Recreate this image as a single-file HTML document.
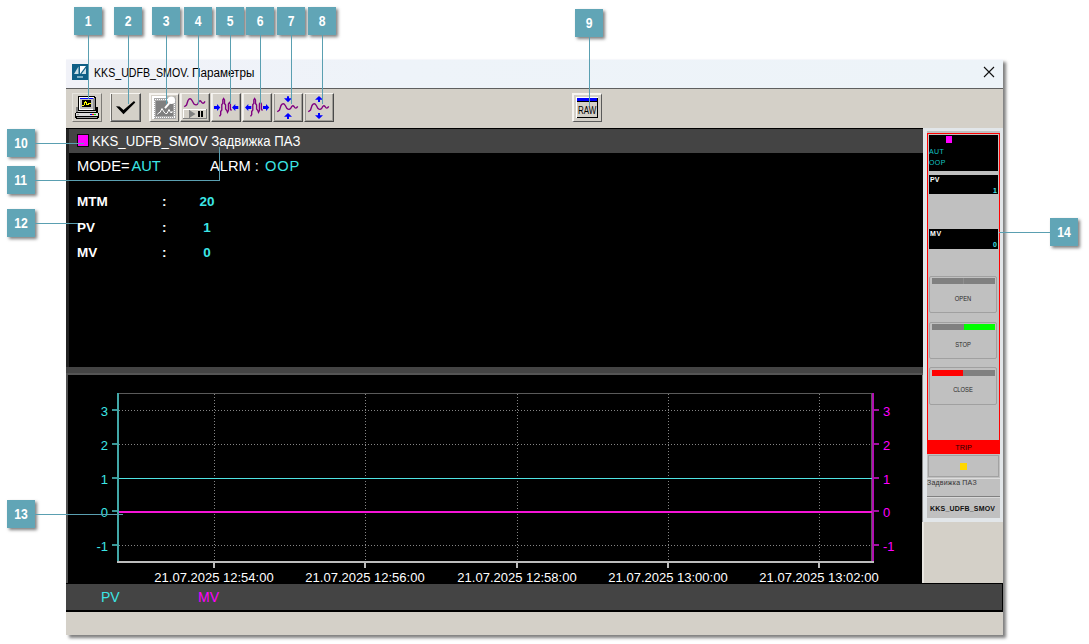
<!DOCTYPE html>
<html lang="ru">
<head>
<meta charset="utf-8">
<title>KKS_UDFB_SMOV. Параметры</title>
<style>
*{box-sizing:border-box;margin:0;padding:0}
html,body{width:1089px;height:644px;overflow:hidden;background:#fff}
body{position:relative;font-family:"Liberation Sans",sans-serif}
.a{position:absolute}
.t{position:absolute;white-space:nowrap;line-height:1}
.co{position:absolute;width:28px;height:28px;background:#61a5b6;color:#fff;font:bold 14.5px/28px "Liberation Sans",sans-serif;text-align:center;box-shadow:2px 2px 3px rgba(0,0,0,.5)}
.co span{display:inline-block;transform:scaleX(.84)}
.ln{position:absolute;background:#5a9fb1}
#win{left:66px;top:59px;width:937px;height:576px;background:#d4d0c8;box-shadow:3px 3px 3px rgba(0,0,0,.5)}
#title{left:66px;top:59px;width:937px;height:29px;background:linear-gradient(90deg,#f1f2f8 0%,#eef3f9 35%,#edf3f8 100%)}
.cap{left:93px;top:67px;font-size:12px;color:#000;transform-origin:0 0;transform:scaleX(.92)}
.btn{position:absolute;top:93px;width:30px;height:29px;background:#d4d0c8;border:1px solid;border-color:#f6f4f0 #4a4a4a #4a4a4a #f6f4f0;box-shadow:inset -1px -1px 0 #8a8884}
.w13{font-size:13.33px;color:#fff}
.w14{font-size:14.67px;color:#fff}
.c14{font-size:14.67px;color:#3ce6e6}
.c13{font-size:13.33px;color:#3ce6e6}
.b13{font-size:13.5px;font-weight:bold;color:#fff}
.v13{font-size:13.5px;font-weight:bold;color:#3ce6e6;width:20px;text-align:center}
.fb{position:absolute;left:929px;width:69px;background:#000}
.ft{position:absolute;white-space:nowrap;line-height:1;font-size:7px}
.fbtn{position:absolute;left:929px;width:68px;height:37px;border:1px solid #a0a0a0;border-radius:2px}
.bar{position:absolute;left:932px;width:63px;height:6px;background:#808080}
.cl{font-size:13px}
.yl{width:18px;text-align:right;color:#3ce6e6;left:90px}
.yr{color:#ff00ff;left:883px}
.xl{width:120px;text-align:center;color:#fff;top:571px}
</style>
</head>
<body>
<div id="win" class="a"></div>
<div id="title" class="a"></div>
<div class="a" style="left:66px;top:59px;width:937px;height:1px;background:#f6f7fb"></div>
<svg class="a" style="left:72px;top:64px" width="16" height="16" viewBox="0 0 16 16"><rect width="16" height="16" fill="#0f5f86"/><path d="M2 10 L6.5 2.5 L6.5 10 Z" fill="#c9dfe8"/><path d="M8 10 L8 2 L14 2 Z" fill="#ffffff"/><path d="M9.5 10 L14 4 L14 10 Z" fill="#c9dfe8"/><rect x="5" y="12" width="6" height="2" fill="#7fb0c6"/></svg>
<div class="t cap" style="left:93.5px;transform:scaleX(.885)">KKS_UDFB_SMOV.</div>
<div class="t cap" style="left:192px;transform:scaleX(.975)">Параметры</div>
<svg class="a" style="left:983px;top:66px" width="12" height="12" viewBox="0 0 12 12"><path d="M1 1 L11 11 M11 1 L1 11" stroke="#111" stroke-width="1.1" fill="none"/></svg>
<div class="a" style="left:66px;top:88px;width:937px;height:1px;background:#5f5f5f"></div>
<div class="btn" style="left:72px;border-color:#e6e4de #7c7a76 #7c7a76 #e6e4de;box-shadow:none"></div>
<div class="btn" style="left:110px;width:31px;box-shadow:inset -1px -1px 0 #808080,inset 1px 0 0 #6e6c68"></div>
<div class="btn" style="left:149px;border-left-width:2px;border-top-width:2px;box-shadow:none;border-right-color:#5a5a5a;border-bottom-color:#5a5a5a"></div>
<div class="btn" style="left:180px;box-shadow:inset -1px -1px 0 #a09e98,inset 1px 0 0 #eeece8"></div>
<div class="btn" style="left:211px;box-shadow:inset -1px -1px 0 #a09e98,inset 1px 0 0 #eeece8"></div>
<div class="btn" style="left:242px;box-shadow:inset -1px -1px 0 #a09e98,inset 1px 0 0 #eeece8"></div>
<div class="btn" style="left:273px;border-left-color:#e4e2dc;box-shadow:inset -1px -1px 0 #a09e98,inset 1px 0 0 #9a9894"></div>
<div class="btn" style="left:304px;border-left-color:#e4e2dc;box-shadow:inset -1px -1px 0 #a09e98,inset 1px 0 0 #9a9894"></div>
<div class="btn" style="left:572px;border-left-width:2px;border-top-width:2px;box-shadow:none;border-right-color:#5a5a5a;border-bottom-color:#5a5a5a"></div>
<svg class="a" style="left:0;top:0" width="1089" height="644" viewBox="0 0 1089 644">
<!-- 1: workstation -->
<g shape-rendering="crispEdges">
<rect x="76" y="107" width="2" height="5" fill="#808080"/>
<rect x="96" y="107" width="2" height="5" fill="#000"/>
<rect x="78" y="96" width="17" height="15" fill="#000"/>
<rect x="95" y="97" width="1" height="14" fill="#000"/>
<rect x="79" y="97" width="15" height="13" fill="#fff"/>
<rect x="80" y="98" width="14" height="11" fill="#c0c0c0"/>
<rect x="93" y="98" width="2" height="12" fill="#909090"/>
<rect x="80" y="98" width="13" height="1" fill="#0000ff"/>
<rect x="82" y="100" width="9" height="7" fill="#000"/>
<rect x="78" y="111" width="18" height="1" fill="#c8c8c8"/>
<rect x="75" y="112" width="24" height="7" fill="#000"/>
<rect x="75" y="112" width="1" height="1" fill="#d4d0c8"/>
<rect x="98" y="112" width="1" height="1" fill="#d4d0c8"/>
<rect x="75" y="118" width="1" height="1" fill="#d4d0c8"/>
<rect x="98" y="118" width="1" height="1" fill="#d4d0c8"/>
<rect x="76" y="113" width="22" height="3" fill="#dcdcdc"/>
<rect x="77" y="114" width="2" height="1" fill="#a0a0a0"/>
<rect x="90" y="114" width="2" height="1" fill="#0000ff"/>
<rect x="92" y="114" width="2" height="1" fill="#ff0000"/>
<rect x="94" y="114" width="2" height="1" fill="#00e000"/>
<rect x="77" y="117" width="20" height="1" fill="#a0a0a0"/>
<g fill="#ffff00"><rect x="82" y="105" width="2" height="1"/><rect x="84" y="102" width="1" height="3"/><rect x="85" y="101" width="1" height="2"/><rect x="86" y="102" width="1" height="2"/><rect x="86" y="104" width="3" height="1"/><rect x="88" y="103" width="3" height="1"/></g>
</g>
<!-- 2: check -->
<path d="M116 106.2L119.6 106.4L123.5 110L134 101L135.3 102.6L123.5 114.2Z" fill="#000"/>
<!-- 3: snapshot (disabled) -->
<g shape-rendering="crispEdges">
<rect x="152" y="96" width="24" height="23" fill="#fff"/>
<rect x="154" y="98" width="22" height="21" fill="#a8a8a8"/>
<rect x="154.5" y="99.5" width="20" height="18" fill="none" stroke="#fff" stroke-width="1" stroke-dasharray="1 1"/>
<rect x="156" y="101" width="17" height="15" fill="#808080"/>
<rect x="166" y="96" width="10" height="2" fill="#b8b6b0"/>
</g>
<circle cx="171.3" cy="100.2" r="3.8" fill="#fff"/>
<path d="M169.3 103.2L165 108.2" stroke="#fff" stroke-width="2" fill="none"/>
<path d="M157.5 114.5L159 112.5H160L162 108.5L164 112L165.5 113.5H167L169 109.5L170.5 112.5H172V111" stroke="#fff" stroke-width="1" fill="none"/>
<!-- 4: wave + play/pause -->
<path d="M184.3 106.8L186.5 105L188 100.5Q190 97 192 100.5L194 104Q196.5 106 198 103.5Q199.5 99.5 201 101.5Q203 105 205 101.3" stroke="#800080" stroke-width="1.4" fill="none"/>
<g shape-rendering="crispEdges">
<rect x="183" y="109" width="24" height="10" fill="#808080"/>
<rect x="183" y="109" width="23" height="9" fill="#fff"/>
<rect x="184" y="110" width="22" height="8" fill="#d4d0c8"/>
<rect x="189" y="110" width="1" height="8" fill="#808080"/>
<rect x="198" y="111" width="2" height="6" fill="#000"/>
<rect x="201" y="111" width="2" height="6" fill="#000"/>
</g>
<path d="M190 110.5L195.5 114L190 117.5Z" fill="#808080"/>
<!-- 5: compress horizontally -->
<g id="w5"><path d="M219.5 116.3L220.7 114.5V111.5L221.8 110V104.5L222.8 103.5V100L223.6 98.6L224.5 100V103.5L225.6 105V109L226.8 110.5L227.5 112.3L228.4 110.5V104L229.5 102.5L230.4 104V109.2L231.5 110.5" stroke="#800080" stroke-width="1.35" fill="none"/></g>
<path d="M214 106H217V104L220.3 107.5L217 111V109H214Z" fill="#0000ff"/>
<path d="M238.3 106H235.3V104L232 107.5L235.3 111V109H238.3Z" fill="#0000ff"/>
<!-- 6: expand horizontally -->
<use href="#w5" x="31"/>
<path d="M251.3 106H248.3V104L245 107.5L248.3 111V109H251.3Z" fill="#0000ff"/>
<path d="M263 106H266V104L269.3 107.5L266 111V109H263Z" fill="#0000ff"/>
<!-- 7: compress vertically -->
<g id="w7"><path d="M277.3 111.7L279.5 110L281 105.5Q283.3 102 285.3 105.5L287 108.5Q289.3 110.5 291 107.8Q292.5 104.5 294 106.5Q295.8 109.8 297.7 106.3" stroke="#800080" stroke-width="1.4" fill="none"/></g>
<path d="M287 96.2H289V98.3H292L288 102.2L284 98.3H287Z" fill="#0000ff"/>
<path d="M287 119H289V116.8H292L288 113L284 116.8H287Z" fill="#0000ff"/>
<!-- 8: expand vertically -->
<use href="#w7" x="31"/>
<path d="M318 102H320V99.8H323L319 96L315 99.8H318Z" fill="#0000ff"/>
<path d="M318 113H320V115.2H323L319 119.1L315 115.2H318Z" fill="#0000ff"/>
<!-- 9: RAW -->
<g shape-rendering="crispEdges">
<rect x="576" y="97" width="22" height="21" fill="#fff"/>
<rect x="577" y="98" width="21" height="20" fill="#000"/>
<rect x="577" y="98" width="20" height="3" fill="#0000ff"/>
<rect x="577" y="102" width="20" height="15" fill="#d4d0c8"/>
</g>
<text x="578" y="113.7" font-family="Liberation Sans, sans-serif" font-size="10.2" fill="#000" textLength="18.3" lengthAdjust="spacingAndGlyphs">RAW</text>
</svg>

<div class="a" style="left:66px;top:128px;width:857px;height:455px;background:#000"></div>
<div class="a" style="left:66px;top:129px;width:3px;height:238px;background:#222"></div>
<div class="a" style="left:69px;top:129px;width:854px;height:24px;background:#444"></div>
<div class="a" style="left:77px;top:134px;width:12px;height:13px;background:#0a0a0a"></div>
<div class="a" style="left:78px;top:135px;width:10px;height:11px;background:#ff00ff"></div>
<div class="t w13" style="left:92px;top:134px;font-size:14px;transform-origin:0 0;transform:scaleX(.94)">KKS_UDFB_SMOV Задвижка ПАЗ</div>
<div class="t w14" style="left:77px;top:159px">MODE=</div>
<div class="t c14" style="left:131.5px;top:159px">AUT</div>
<div class="t w14" style="left:210px;top:159px">ALRM :</div>
<div class="t c14" style="left:265px;top:159px;letter-spacing:.8px">OOP</div>
<div class="t b13" style="left:77px;top:195px">MTM</div>
<div class="t b13" style="left:162px;top:195px">:</div>
<div class="t v13" style="left:197px;top:195px">20</div>
<div class="t b13" style="left:77px;top:221px">PV</div>
<div class="t b13" style="left:162px;top:221px">:</div>
<div class="t v13" style="left:197px;top:221px">1</div>
<div class="t b13" style="left:77px;top:246px">MV</div>
<div class="t b13" style="left:162px;top:246px">:</div>
<div class="t v13" style="left:197px;top:246px">0</div>
<div class="a" style="left:66px;top:367px;width:857px;height:6px;background:#444"></div>
<div class="a" style="left:66px;top:373px;width:857px;height:2px;background:#555"></div>
<div class="a" style="left:66px;top:375px;width:2px;height:208px;background:#505050"></div>
<div class="a" style="left:922px;top:375px;width:1px;height:208px;background:#8a8a8a"></div>
<div class="a" style="left:66px;top:583px;width:937px;height:29px;background:#444;border:1px solid #000;border-left:0;border-bottom-width:2px"></div>
<div class="t" style="left:101px;top:590px;font-size:14px;color:#3ce6e6">PV</div>
<div class="t" style="left:198px;top:590px;font-size:14px;color:#ff00ff">MV</div>
<div class="a" style="left:922px;top:522px;width:2px;height:61px;background:#e8e6e0"></div>
<div class="a" style="left:923px;top:128px;width:80px;height:394px;background:#e2e6e9"></div>
<div class="a" style="left:927px;top:131px;width:73px;height:387px;background:#c0c0c0"></div>
<div class="a" style="left:927px;top:133px;width:73px;height:308px;border:1px solid #f00"></div>
<div class="fb" style="top:135px;height:36px"></div>
<div class="a" style="left:946.4px;top:136.4px;width:6px;height:6.5px;background:#ff00ff"></div>
<div class="ft" style="left:929px;top:148px;color:#12c4c4;letter-spacing:.4px">AUT</div>
<div class="ft" style="left:929px;top:159px;color:#12c4c4;letter-spacing:.4px">OOP</div>
<div class="fb" style="top:175px;height:19px"></div>
<div class="ft" style="left:930px;top:176px;color:#fff;font-weight:bold">PV</div>
<div class="ft" style="left:929px;top:187px;width:68px;text-align:right;color:#45e4e4;font-weight:bold">1</div>
<div class="fb" style="top:229px;height:20px"></div>
<div class="ft" style="left:930px;top:230px;color:#fff;font-weight:bold;letter-spacing:.6px">MV</div>
<div class="ft" style="left:929px;top:241px;width:68px;text-align:right;color:#45e4e4;font-weight:bold">0</div>
<div class="fbtn" style="top:276px;height:37px"></div>
<div class="bar" style="top:278px"></div>
<div class="a" style="left:963px;top:278px;width:1px;height:6px;background:#8e8e8e"></div>
<div class="ft" style="left:929px;top:295px;width:68px;text-align:center;color:#2a2a2a;transform:scaleX(.83)">OPEN</div>
<div class="fbtn" style="top:322px;height:37px"></div>
<div class="bar" style="top:324px"></div>
<div class="a" style="left:964px;top:324px;width:31px;height:6px;background:#00ff00"></div>
<div class="ft" style="left:929px;top:341px;width:68px;text-align:center;color:#2a2a2a;transform:scaleX(.83)">STOP</div>
<div class="fbtn" style="top:367px;height:38px"></div>
<div class="bar" style="top:370px"></div>
<div class="a" style="left:932px;top:370px;width:31px;height:6px;background:#ff0000"></div>
<div class="ft" style="left:929px;top:386px;width:68px;text-align:center;color:#2a2a2a;transform:scaleX(.83)">CLOSE</div>
<div class="a" style="left:927px;top:440px;width:73px;height:14px;background:#ff0000"></div>
<div class="ft" style="left:927px;top:444px;width:73px;text-align:center;color:#260000;font-size:7.3px">TRIP</div>
<div class="a" style="left:928px;top:455px;width:71px;height:22px;border:1px solid #a2a2a2"></div>
<div class="a" style="left:960px;top:463px;width:7px;height:7px;background:#ffd700"></div>
<div class="a" style="left:927px;top:478px;width:73px;height:1px;background:#dcdcdc"></div>
<div class="ft" style="left:927px;top:479px;color:#333;letter-spacing:.2px">Задвижка ПАЗ</div>
<div class="a" style="left:927px;top:496px;width:73px;height:1px;background:#808080"></div>
<div class="a" style="left:927px;top:497px;width:73px;height:1px;background:#d8d8d8"></div>
<div class="ft" style="left:930px;top:505px;color:#111;font-weight:bold;letter-spacing:.2px">KKS_UDFB_SMOV</div>
<svg class="a" style="left:0;top:0" width="1089" height="644" viewBox="0 0 1089 644" shape-rendering="crispEdges">
<rect x="119" y="393" width="753" height="1" fill="#5a5a5a"/>
<rect x="871" y="393" width="1" height="168" fill="#5a5a5a"/>
<g stroke="#858585" stroke-width="1" stroke-dasharray="1 2" fill="none">
<path d="M119 410.5H871M119 444.5H871M119 478.5H871M119 511.5H871M119 545.5H871"/>
<path d="M214.5 394V561M365.5 394V561M517.5 394V561M668.5 394V561M819.5 394V561"/>
</g>
<rect x="119" y="478" width="753" height="1" fill="#4fe3e3"/>
<rect x="119" y="511" width="753" height="2" fill="#f513d6"/>
<rect x="117" y="393" width="2" height="170" fill="#42a8a8"/>
<g fill="#3a9696"><rect x="112" y="409" width="5" height="2"/><rect x="112" y="443" width="5" height="2"/><rect x="112" y="477" width="5" height="2"/><rect x="112" y="510" width="5" height="2"/><rect x="112" y="544" width="5" height="2"/></g>
<rect x="872" y="393" width="2" height="170" fill="#b010b0"/>
<g fill="#a010a0"><rect x="874" y="409" width="5" height="2"/><rect x="874" y="443" width="5" height="2"/><rect x="874" y="477" width="5" height="2"/><rect x="874" y="510" width="5" height="2"/><rect x="874" y="544" width="5" height="2"/></g>
<rect x="117" y="561" width="757" height="2" fill="#bdbdbd"/>
<g fill="#bdbdbd"><rect x="213" y="563" width="2" height="5"/><rect x="364" y="563" width="2" height="5"/><rect x="516" y="563" width="2" height="5"/><rect x="667" y="563" width="2" height="5"/><rect x="818" y="563" width="2" height="5"/></g>
</svg>
<div class="cl">
<div class="t yl" style="top:405px">3</div>
<div class="t yr" style="top:405px">3</div>
<div class="t yl" style="top:439px">2</div>
<div class="t yr" style="top:439px">2</div>
<div class="t yl" style="top:473px">1</div>
<div class="t yr" style="top:473px">1</div>
<div class="t yl" style="top:506px">0</div>
<div class="t yr" style="top:506px">0</div>
<div class="t yl" style="top:540px">-1</div>
<div class="t yr" style="top:540px">-1</div>
<div class="t xl" style="left:154px">21.07.2025 12:54:00</div>
<div class="t xl" style="left:305px">21.07.2025 12:56:00</div>
<div class="t xl" style="left:457px">21.07.2025 12:58:00</div>
<div class="t xl" style="left:608px">21.07.2025 13:00:00</div>
<div class="t xl" style="left:759px">21.07.2025 13:02:00</div>
</div>
<div class="co" style="left:74px;top:7px"><span>1</span></div>
<div class="co" style="left:114px;top:7px"><span>2</span></div>
<div class="co" style="left:152px;top:7px"><span>3</span></div>
<div class="co" style="left:184px;top:7px"><span>4</span></div>
<div class="co" style="left:216px;top:7px"><span>5</span></div>
<div class="co" style="left:246px;top:7px"><span>6</span></div>
<div class="co" style="left:277px;top:7px"><span>7</span></div>
<div class="co" style="left:308px;top:7px"><span>8</span></div>
<div class="co" style="left:575px;top:9px"><span>9</span></div>
<div class="co" style="left:7px;top:129px"><span>10</span></div>
<div class="co" style="left:7px;top:166px"><span>11</span></div>
<div class="co" style="left:7px;top:209px"><span>12</span></div>
<div class="co" style="left:7px;top:500px"><span>13</span></div>
<div class="co" style="left:1050px;top:218px"><span>14</span></div>
<div class="ln" style="left:88px;top:35px;width:1px;height:64px"></div>
<div class="ln" style="left:128px;top:35px;width:1px;height:69px"></div>
<div class="ln" style="left:166px;top:35px;width:1px;height:69px"></div>
<div class="ln" style="left:198px;top:35px;width:1px;height:69px"></div>
<div class="ln" style="left:230px;top:35px;width:1px;height:69px"></div>
<div class="ln" style="left:260px;top:35px;width:1px;height:69px"></div>
<div class="ln" style="left:291px;top:35px;width:1px;height:69px"></div>
<div class="ln" style="left:322px;top:35px;width:1px;height:69px"></div>
<div class="ln" style="left:589px;top:37px;width:1px;height:69px"></div>
<div class="ln" style="left:35px;top:143px;width:49px;height:1px"></div>
<div class="ln" style="left:35px;top:180px;width:185px;height:1px"></div>
<div class="ln" style="left:219px;top:147px;width:1px;height:34px"></div>
<div class="ln" style="left:35px;top:223px;width:43px;height:1px"></div>
<div class="ln" style="left:35px;top:514px;width:88px;height:1px"></div>
<div class="ln" style="left:999px;top:232px;width:51px;height:1px"></div>
</body>
</html>
